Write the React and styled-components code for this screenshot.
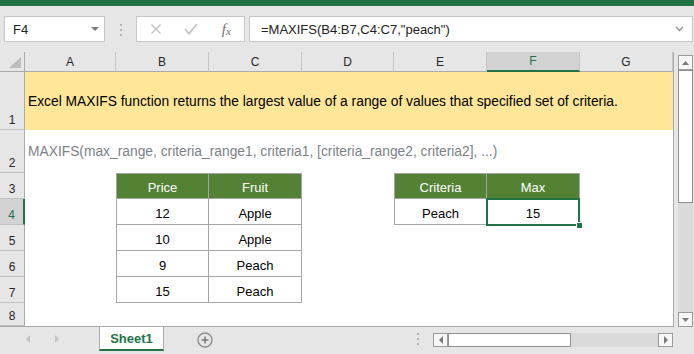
import React from 'react';
import styled, { createGlobalStyle } from 'styled-components';

const GlobalStyle = createGlobalStyle`
  html, body { margin: 0; padding: 0; }
  body {
    font-family: "Liberation Sans", Arial, sans-serif;
    background: #e6e6e6;
  }
`;

const COLS = ['A', 'B', 'C', 'D', 'E', 'F', 'G'];

// rows 3..8, one entry per column A..G
const TABLE = [
  [null, { t: 'Price', head: true, left: true, top: true }, { t: 'Fruit', head: true, top: true }, null, { t: 'Criteria', head: true, left: true, top: true }, { t: 'Max', head: true, top: true }, null],
  [null, { t: '12', left: true }, { t: 'Apple' }, null, { t: 'Peach', left: true }, { t: '15', sel: true }, null],
  [null, { t: '10', left: true }, { t: 'Apple' }, null, null, null, null],
  [null, { t: '9', left: true }, { t: 'Peach' }, null, null, null, null],
  [null, { t: '15', left: true }, { t: 'Peach' }, null, null, null, null],
  [null, null, null, null, null, null, null],
];

const Window = styled.div`
  width: 694px;
  height: 354px;
  display: flex;
  flex-direction: column;
  overflow: hidden;
  background: #e6e6e6;
`;

const TitleStrip = styled.div`
  flex: none;
  height: 6px;
  background: #217346;
`;

const FormulaBar = styled.div`
  flex: none;
  height: 46px;
  box-sizing: border-box;
  display: flex;
  align-items: flex-start;
  padding: 10px 1px 0 4px;
`;

const Box = styled.div`
  height: 26px;
  box-sizing: border-box;
  background: #fff;
  border: 1px solid #c6c6c6;
  display: flex;
  align-items: center;
`;

const NameBox = styled(Box)`
  width: 101px;
  justify-content: space-between;
  padding: 0 5px 0 8px;
  font-size: 13px;
  color: #222;
`;

const Caret = styled.span`
  width: 0;
  height: 0;
  border-left: 4px solid transparent;
  border-right: 4px solid transparent;
  border-top: 4px solid #7a7a7a;
`;

const Grip = styled.div`
  flex: none;
  width: 2px;
  display: flex;
  flex-direction: column;
  gap: 3px;
  margin: ${(p) => p.$m};
  span {
    width: 2px;
    height: 2px;
    background: #b4b4b4;
  }
`;

const FxGroup = styled(Box)`
  width: 109px;
  padding-left: 1px;
`;

const IconSlot = styled.div`
  width: 36px;
  display: flex;
  justify-content: center;
  align-items: center;
`;

const FxLabel = styled.span`
  font-family: "Liberation Serif", "Times New Roman", serif;
  font-style: italic;
  font-size: 15px;
  color: #6f6f6f;
  sub {
    font-size: 11px;
    vertical-align: -1px;
  }
`;

const FormulaInput = styled(Box)`
  flex: 1;
  margin-left: 4px;
  padding: 0 8px 0 11px;
  justify-content: space-between;
  font-size: 13px;
  color: #222;
`;

const SheetArea = styled.div`
  flex: none;
  height: 275px;
  display: flex;
`;

const Grid = styled.div`
  width: 673px;
  display: grid;
  grid-template-columns: 25px 91px 93px 93px 92px 93px 93px 93px;
  grid-template-rows: 20px 58px 43px repeat(5, 26px) 23px;
  background: #fff;
  border-right: 1px solid #ababab;
  border-bottom: 1px solid #ababab;
  overflow: hidden;
`;

const Corner = styled.div`
  background: #e6e6e6;
  border-right: 1px solid #ababab;
  border-bottom: 1px solid #ababab;
`;

const ColHead = styled.div`
  box-sizing: border-box;
  display: flex;
  align-items: center;
  justify-content: center;
  font-size: 12px;
  background: ${(p) => (p.$active ? '#d2d2d2' : '#e6e6e6')};
  color: ${(p) => (p.$active ? '#217346' : '#262626')};
  border-right: 1px solid #c6c6c6;
  border-bottom: ${(p) => (p.$active ? '2px solid #217346' : '1px solid #ababab')};
`;

const RowHead = styled.div`
  box-sizing: border-box;
  display: flex;
  align-items: flex-end;
  justify-content: center;
  padding-bottom: 2px;
  font-size: 12px;
  line-height: 14px;
  background: ${(p) => (p.$active ? '#d2d2d2' : '#e6e6e6')};
  color: ${(p) => (p.$active ? '#217346' : '#262626')};
  border-right: ${(p) => (p.$active ? '2px solid #217346' : '1px solid #ababab')};
  border-bottom: 1px solid #c0c0c0;
`;

const Banner = styled.div`
  grid-column: span 7;
  display: flex;
  align-items: center;
  padding-left: 3px;
  background: ${(p) => p.$fill || 'transparent'};
  color: ${(p) => p.$color || '#000'};
  font-size: 13.8px;
  white-space: nowrap;
`;

const Cell = styled.div`
  position: relative;
  box-sizing: border-box;
  display: flex;
  align-items: flex-end;
  justify-content: center;
  padding-bottom: 3px;
  font-size: 13px;
  line-height: 15px;
  color: ${(p) => (p.$head ? '#fff' : '#000')};
  background: ${(p) => (p.$head ? '#548235' : 'transparent')};
  ${(p) => p.$boxed && `
    border-right: 1px solid #a6a6a6;
    border-bottom: 1px solid #a6a6a6;
  `}
  ${(p) => p.$left && 'border-left: 1px solid #a6a6a6;'}
  ${(p) => p.$top && 'border-top: 1px solid #a6a6a6;'}
  ${(p) => p.$sel && `
    &::before {
      content: '';
      position: absolute;
      left: -1px;
      top: -1px;
      right: -1px;
      bottom: -2px;
      border: 2px solid #217346;
    }
    &::after {
      content: '';
      position: absolute;
      right: -4px;
      bottom: -5px;
      width: 5px;
      height: 5px;
      background: #217346;
      border: 1px solid #fff;
    }
  `}
`;

const VScroll = styled.div`
  width: 15px;
  margin-left: 4px;
  padding-top: 3px;
  display: flex;
  flex-direction: column;
`;

const ScrollBtn = styled.div`
  flex: none;
  width: 15px;
  height: ${(p) => p.$h || 15}px;
  box-sizing: border-box;
  background: #f7f7f7;
  border: 1px solid #9a9a9a;
  display: flex;
  align-items: center;
  justify-content: center;
`;

const Thumb = styled.div`
  flex: none;
  box-sizing: border-box;
  background: #fff;
  border: 1px solid #8f8f8f;
  ${(p) => (p.$vertical ? `height: 133px;` : `width: 123px;`)}
`;

const Track = styled.div`
  flex: 1;
  background: #dadada;
`;

const BottomBar = styled.div`
  flex: 1;
  display: flex;
  align-items: flex-start;
  padding-right: 21px;
`;

const TabNav = styled.div`
  flex: none;
  width: 99px;
  height: 24px;
  box-sizing: border-box;
  padding-left: 26px;
  display: flex;
  align-items: center;
  gap: 25px;
`;

const Arrow = styled.span`
  width: 0;
  height: 0;
  border-top: 4px solid transparent;
  border-bottom: 4px solid transparent;
  ${(p) => (p.$dir === 'left' ? 'border-right' : 'border-left')}: 4px solid ${(p) => p.$color || '#c3c3c3'};
`;

const SheetTab = styled.div`
  flex: none;
  width: 65px;
  height: 24px;
  box-sizing: border-box;
  background: #fff;
  border-left: 1px solid #ababab;
  border-right: 1px solid #ababab;
  border-bottom: 2px solid #217346;
  display: flex;
  align-items: center;
  justify-content: center;
  font-size: 13px;
  font-weight: bold;
  color: #217346;
`;

const AddSheet = styled.div`
  margin: 5px 0 0 33px;
  width: 16px;
  height: 16px;
`;

const Spacer = styled.div`
  flex: 1;
`;

const HScroll = styled.div`
  width: 240px;
  height: 14px;
  margin-top: 6px;
  display: flex;
`;

function Icon({ children, w, h }) {
  return (
    <svg width={w} height={h} viewBox={`0 0 ${w} ${h}`} fill="none">
      {children}
    </svg>
  );
}

export default function App() {
  return (
    <Window>
      <GlobalStyle />
      <TitleStrip />
      <FormulaBar>
        <NameBox>
          F4
          <Caret />
        </NameBox>
        <Grip $m="8px 14px 0 15px">
          <span />
          <span />
          <span />
        </Grip>
        <FxGroup>
          <IconSlot>
            <Icon w={12} h={12}>
              <path d="M1.5 1.5 L10.5 10.5 M10.5 1.5 L1.5 10.5" stroke="#c3c3c3" strokeWidth="1.4" />
            </Icon>
          </IconSlot>
          <IconSlot>
            <Icon w={14} h={12}>
              <path d="M1 6 L5 10.5 L13 1" stroke="#c3c3c3" strokeWidth="1.8" />
            </Icon>
          </IconSlot>
          <IconSlot>
            <FxLabel>
              f<sub>x</sub>
            </FxLabel>
          </IconSlot>
        </FxGroup>
        <FormulaInput>
          =MAXIFS(B4:B7,C4:C7,"peach")
          <Icon w={9} h={6}>
            <path d="M1 1 L4.5 4.5 L8 1" stroke="#8a8a8a" strokeWidth="1.3" />
          </Icon>
        </FormulaInput>
      </FormulaBar>

      <SheetArea>
        <Grid>
          <Corner>
            <Icon w={24} h={19}>
              <polygon points="21,5 21,16 9,16" fill="#bcbcbc" />
            </Icon>
          </Corner>
          {COLS.map((c) => (
            <ColHead key={c} $active={c === 'F'}>
              {c}
            </ColHead>
          ))}

          <RowHead>1</RowHead>
          <Banner $fill="#ffe699">
            Excel MAXIFS function returns the largest value of a range of values that specified set of criteria.
          </Banner>

          <RowHead>2</RowHead>
          <Banner $color="#7b7f86">
            MAXIFS(max_range, criteria_range1, criteria1, [criteria_range2, criteria2], ...)
          </Banner>

          {TABLE.map((row, i) => (
            <React.Fragment key={i}>
              <RowHead $active={i === 1}>{i + 3}</RowHead>
              {row.map((cell, j) =>
                cell ? (
                  <Cell key={j} $boxed $head={cell.head} $left={cell.left} $top={cell.top} $sel={cell.sel}>
                    {cell.t}
                  </Cell>
                ) : (
                  <Cell key={j} />
                )
              )}
            </React.Fragment>
          ))}
        </Grid>

        <VScroll>
          <ScrollBtn>
            <Icon w={7} h={4}>
              <polygon points="0,4 7,4 3.5,0" fill="#7a7a7a" />
            </Icon>
          </ScrollBtn>
          <Thumb $vertical />
          <Track />
          <ScrollBtn>
            <Icon w={7} h={4}>
              <polygon points="0,0 7,0 3.5,4" fill="#7a7a7a" />
            </Icon>
          </ScrollBtn>
        </VScroll>
      </SheetArea>

      <BottomBar>
        <TabNav>
          <Arrow $dir="left" />
          <Arrow $dir="right" />
        </TabNav>
        <SheetTab>Sheet1</SheetTab>
        <AddSheet>
          <Icon w={16} h={16}>
            <circle cx="8" cy="8" r="7" stroke="#8a8a8a" strokeWidth="1.3" />
            <path d="M8 4.5 V11.5 M4.5 8 H11.5" stroke="#7a7a7a" strokeWidth="1.5" />
          </Icon>
        </AddSheet>
        <Spacer />
        <Grip $m="6px 14px 0 0">
          <span />
          <span />
          <span />
        </Grip>
        <HScroll>
          <ScrollBtn $h={14}>
            <Arrow $dir="left" $color="#7a7a7a" />
          </ScrollBtn>
          <Thumb />
          <Track />
          <ScrollBtn $h={14}>
            <Arrow $dir="right" $color="#7a7a7a" />
          </ScrollBtn>
        </HScroll>
      </BottomBar>
    </Window>
  );
}
